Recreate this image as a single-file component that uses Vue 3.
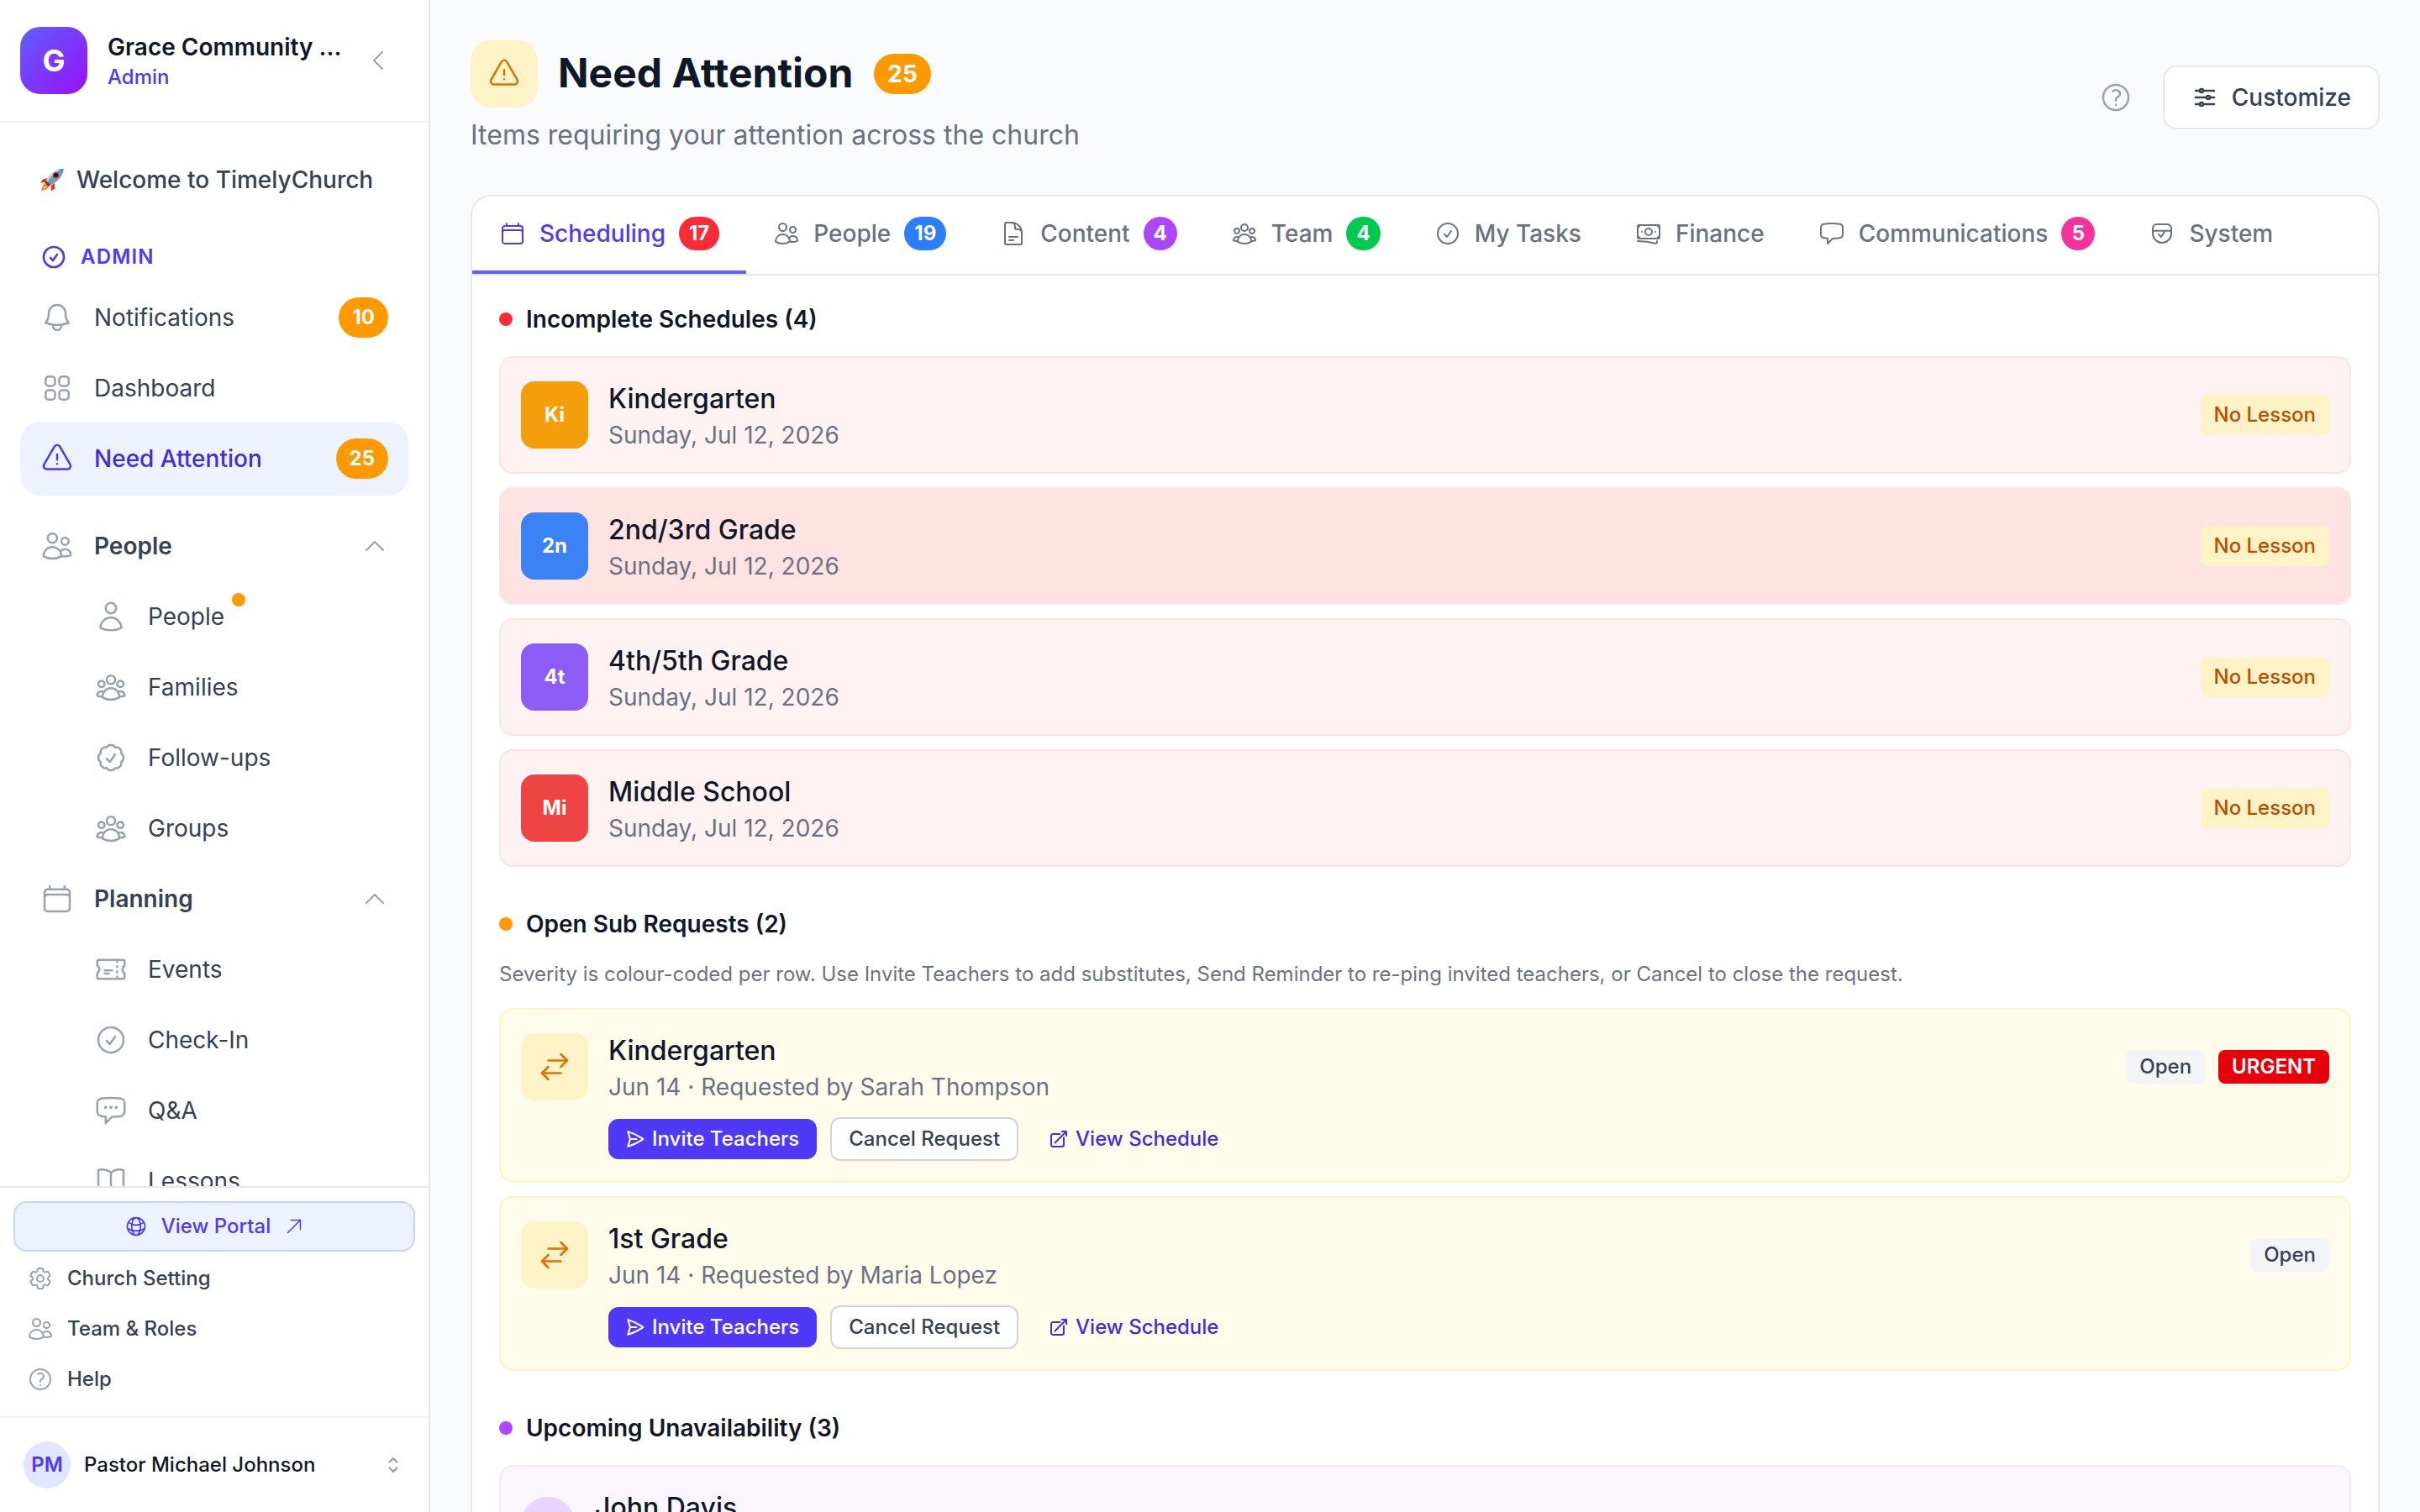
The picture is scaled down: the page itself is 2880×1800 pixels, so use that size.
<template>
  <div class="layout">
    <aside class="sidebar">
      <div class="church">
        <div class="church-logo">G</div>
        <div class="church-info">
          <div class="church-name">Grace Community ...</div>
          <div class="church-role">Admin</div>
        </div>
        <svg class="icon icon-md collapse" viewBox="0 0 24 24">
          <path :d="icons.chevronLeft" />
        </svg>
      </div>

      <nav class="nav">
        <div class="welcome">
          <svg class="rocket" viewBox="0 0 28 28">
            <path d="M8 12 3 13.5 0 17.5l7-.5Z" fill="#e8321c" />
            <path d="m17 18 .5 6.500-5 3 .5-7Z" fill="#e8321c" />
            <path d="m6 18-3 3-2 6 6-1.500 4-4Z" fill="#fb6a1c" />
            <path d="m6 20-3.500 5.500L8 23Z" fill="#ffe14a" />
            <path
              d="M27.500 1C20 1 12 5 6 16.500l4.500 4.500C20 17.500 27.500 9 27.500 1Z"
              fill="#6f9cb8"
            />
            <path
              d="M27.500 1C20 1 12 5 6 16.500l2 1.500C12 10 19 3.500 27.500 1Z"
              fill="#bcd9e8"
            />
            <path d="m7 15-1.500 2.500 4 4 2.500-1.500Z" fill="#8f1d1a" />
            <path d="M22 1.800 27.500 1l-.5 5Z" fill="#4f8fc0" />
            <circle cx="18.500" cy="8.500" r="3.600" fill="#a92a24" />
            <circle cx="18.500" cy="8.500" r="2.200" fill="#1f1413" />
          </svg>
          <span>Welcome to TimelyChurch</span>
        </div>

        <div class="nav-label">
          <svg class="icon icon-md bold" viewBox="0 0 24 24">
            <path :d="icons.check" />
          </svg>
          <span>ADMIN</span>
        </div>

        <div
          v-for="item in adminItems"
          :key="item.label"
          class="nav-item"
          :class="{ active: item.active, tall: item.count }"
        >
          <svg class="icon icon-lg" viewBox="0 0 24 24">
            <path :d="icons[item.icon]" />
          </svg>
          <span class="nav-text">{{ item.label }}</span>
          <span v-if="item.count" class="nav-count">{{ item.count }}</span>
        </div>

        <div class="nav-groups">
          <div v-for="group in groups" :key="group.label">
            <div class="group-head">
              <svg class="icon icon-lg" viewBox="0 0 24 24">
                <path :d="icons[group.icon]" />
              </svg>
              <span class="nav-text">{{ group.label }}</span>
              <svg class="icon icon-md" viewBox="0 0 24 24">
                <path :d="icons.chevronUp" />
              </svg>
            </div>
            <div
              v-for="item in group.items"
              :key="item.label"
              class="group-item"
            >
              <svg class="icon icon-lg" viewBox="0 0 24 24">
                <path :d="icons[item.icon]" />
              </svg>
              <span>{{ item.label }}</span>
              <span v-if="item.dot" class="item-dot"></span>
            </div>
          </div>
        </div>
      </nav>

      <div class="side-footer">
        <a class="portal">
          <svg class="icon icon-28" viewBox="0 0 24 24">
            <path :d="icons.globe" />
          </svg>
          <span>View Portal</span>
          <svg class="icon icon-sm" viewBox="0 0 24 24">
            <path :d="icons.arrowUpRight" />
          </svg>
        </a>
        <div v-for="link in footerLinks" :key="link.label" class="footer-link">
          <svg class="icon icon-md" viewBox="0 0 24 24">
            <path :d="icons[link.icon]" />
          </svg>
          <span>{{ link.label }}</span>
        </div>
      </div>

      <div class="user">
        <div class="user-avatar">PM</div>
        <span class="user-name">Pastor Michael Johnson</span>
        <svg class="icon icon-28 bold" viewBox="0 0 24 24">
          <path :d="icons.upDown" />
        </svg>
      </div>
    </aside>

    <main class="main">
      <header class="page-header">
        <div>
          <div class="title-row">
            <div class="title-icon">
              <svg class="icon icon-lg" viewBox="0 0 24 24">
                <path :d="icons.warning" />
              </svg>
            </div>
            <h1>Need Attention</h1>
            <span class="title-count">25</span>
          </div>
          <p class="subtitle">Items requiring your attention across the church</p>
        </div>
        <div class="header-actions">
          <svg class="icon icon-lg help" viewBox="0 0 24 24">
            <path :d="icons.question" />
          </svg>
          <button class="customize">
            <svg class="icon icon-md bold" viewBox="0 0 24 24">
              <path :d="icons.adjustments" />
            </svg>
            Customize
          </button>
        </div>
      </header>

      <section class="panel">
        <div class="tabs">
          <div
            v-for="tab in tabs"
            :key="tab.label"
            class="tab"
            :class="{ active: activeTab === tab.label }"
            @click="activeTab = tab.label"
          >
            <svg class="icon icon-md" viewBox="0 0 24 24">
              <path :d="icons[tab.icon]" />
            </svg>
            <span>{{ tab.label }}</span>
            <span
              v-if="tab.count"
              class="tab-count"
              :style="{ background: tab.color }"
              >{{ tab.count }}</span
            >
          </div>
        </div>

        <div class="content">
          <div class="block">
            <h2><span class="dot red"></span>Incomplete Schedules (4)</h2>
            <div class="cards">
              <div
                v-for="item in schedules"
                :key="item.name"
                class="card card-red"
                :class="{ hovered: item.hovered }"
              >
                <div class="tile" :style="{ background: item.color }">
                  {{ item.name.slice(0, 2) }}
                </div>
                <div class="card-body">
                  <div class="card-title">{{ item.name }}</div>
                  <div class="card-sub">Sunday, Jul 12, 2026</div>
                </div>
                <span class="tag tag-lesson">No Lesson</span>
              </div>
            </div>
          </div>

          <div class="block">
            <h2><span class="dot orange"></span>Open Sub Requests (2)</h2>
            <p class="hint">
              Severity is colour-coded per row. Use Invite Teachers to add
              substitutes, Send Reminder to re-ping invited teachers, or Cancel
              to close the request.
            </p>
            <div class="cards">
              <div
                v-for="request in requests"
                :key="request.name"
                class="card card-amber"
              >
                <div class="tile tile-amber">
                  <svg class="icon icon-lg" viewBox="0 0 24 24">
                    <path :d="icons.swap" />
                  </svg>
                </div>
                <div class="card-body">
                  <div class="card-title">{{ request.name }}</div>
                  <div class="card-sub">
                    Jun 14 · Requested by {{ request.by }}
                  </div>
                  <div class="actions">
                    <button class="btn btn-primary">
                      <svg class="icon icon-sm bold" viewBox="0 0 24 24">
                        <path :d="icons.send" />
                      </svg>
                      Invite Teachers
                    </button>
                    <button class="btn btn-outline">Cancel Request</button>
                    <button class="btn btn-link">
                      <svg class="icon icon-sm bold" viewBox="0 0 24 24">
                        <path :d="icons.external" />
                      </svg>
                      View Schedule
                    </button>
                  </div>
                </div>
                <div class="tags">
                  <span class="tag tag-open">Open</span>
                  <span v-if="request.urgent" class="tag tag-urgent"
                    >URGENT</span
                  >
                </div>
              </div>
            </div>
          </div>

          <div class="block">
            <h2><span class="dot purple"></span>Upcoming Unavailability (3)</h2>
            <div class="cards">
              <div class="card card-purple">
                <div class="person"></div>
                <div class="card-body">
                  <div class="card-title">John Davis</div>
                </div>
              </div>
            </div>
          </div>
        </div>
      </section>
    </main>
  </div>
</template>

<script setup>
import { ref } from "vue";

const activeTab = ref("Scheduling");

const adminItems = [
  { label: "Notifications", icon: "bell", count: 10 },
  { label: "Dashboard", icon: "grid" },
  { label: "Need Attention", icon: "warning", count: 25, active: true },
];

const groups = [
  {
    label: "People",
    icon: "users",
    items: [
      { label: "People", icon: "user", dot: true },
      { label: "Families", icon: "group" },
      { label: "Follow-ups", icon: "badge" },
      { label: "Groups", icon: "group" },
    ],
  },
  {
    label: "Planning",
    icon: "calendar",
    items: [
      { label: "Events", icon: "ticket" },
      { label: "Check-In", icon: "check" },
      { label: "Q&A", icon: "chatDots" },
      { label: "Lessons", icon: "book" },
    ],
  },
];

const footerLinks = [
  { label: "Church Setting", icon: "cog" },
  { label: "Team & Roles", icon: "users" },
  { label: "Help", icon: "question" },
];

const tabs = [
  { label: "Scheduling", icon: "calendar", count: 17, color: "#fb2c36" },
  { label: "People", icon: "users", count: 19, color: "#2b7fff" },
  { label: "Content", icon: "document", count: 4, color: "#ad46ff" },
  { label: "Team", icon: "group", count: 4, color: "#00c950" },
  { label: "My Tasks", icon: "check" },
  { label: "Finance", icon: "banknotes" },
  { label: "Communications", icon: "chat", count: 5, color: "#f6339a" },
  { label: "System", icon: "system" },
];

const schedules = [
  { name: "Kindergarten", color: "#f59e0b" },
  { name: "2nd/3rd Grade", color: "#3b82f6", hovered: true },
  { name: "4th/5th Grade", color: "#8b5cf6" },
  { name: "Middle School", color: "#ef4444" },
];

const requests = [
  { name: "Kindergarten", by: "Sarah Thompson", urgent: true },
  { name: "1st Grade", by: "Maria Lopez" },
];

const icons = {
  chevronLeft: "M15.75 19.5 8.25 12l7.5-7.5",
  chevronUp: "m4.5 15.75 7.5-7.5 7.5 7.5",
  upDown: "M8.25 15 12 18.75 15.75 15m-7.5-6L12 5.25 15.75 9",
  arrowUpRight: "m4.5 19.5 15-15m0 0H8.25m11.25 0v11.25",
  check: "M9 12.75 11.25 15 15 9.75M21 12a9 9 0 1 1-18 0 9 9 0 0 1 18 0Z",
  bell: "M14.857 17.082a23.848 23.848 0 0 0 5.454-1.31A8.967 8.967 0 0 1 18 9.75V9A6 6 0 0 0 6 9v.75a8.967 8.967 0 0 1-2.312 6.022c1.733.64 3.56 1.085 5.455 1.31m5.714 0a24.255 24.255 0 0 1-5.714 0m5.714 0a3 3 0 1 1-5.714 0",
  grid: "M3.75 6A2.25 2.25 0 0 1 6 3.75h2.25A2.25 2.25 0 0 1 10.5 6v2.25a2.25 2.25 0 0 1-2.25 2.25H6a2.25 2.25 0 0 1-2.25-2.25V6ZM3.75 15.75A2.25 2.25 0 0 1 6 13.5h2.25a2.25 2.25 0 0 1 2.25 2.25V18a2.25 2.25 0 0 1-2.25 2.25H6A2.25 2.25 0 0 1 3.75 18v-2.25ZM13.5 6a2.25 2.25 0 0 1 2.25-2.25H18A2.25 2.25 0 0 1 20.25 6v2.25A2.25 2.25 0 0 1 18 10.5h-2.25a2.25 2.25 0 0 1-2.25-2.25V6ZM13.5 15.75a2.25 2.25 0 0 1 2.25-2.25H18a2.25 2.25 0 0 1 2.25 2.25V18A2.25 2.25 0 0 1 18 20.25h-2.25A2.25 2.25 0 0 1 13.5 18v-2.25Z",
  warning:
    "M12 9v3.75m-9.303 3.376c-.866 1.5.217 3.374 1.948 3.374h14.71c1.73 0 2.813-1.874 1.948-3.374L13.949 3.378c-.866-1.5-3.032-1.5-3.898 0L2.697 16.126ZM12 15.75h.007v.008H12v-.008Z",
  users:
    "M15 19.128a9.38 9.38 0 0 0 2.625.372 9.337 9.337 0 0 0 4.121-.952 4.125 4.125 0 0 0-7.533-2.493M15 19.128v-.003c0-1.113-.285-2.16-.786-3.07M15 19.128v.106A12.318 12.318 0 0 1 8.624 21c-2.331 0-4.512-.645-6.374-1.766l-.001-.109a6.375 6.375 0 0 1 11.964-3.07M12 6.375a3.375 3.375 0 1 1-6.75 0 3.375 3.375 0 0 1 6.75 0Zm8.25 2.25a2.625 2.625 0 1 1-5.25 0 2.625 2.625 0 0 1 5.25 0Z",
  user: "M15.75 6a3.75 3.75 0 1 1-7.5 0 3.75 3.75 0 0 1 7.5 0ZM4.501 20.118a7.5 7.5 0 0 1 14.998 0A17.933 17.933 0 0 1 12 21.75c-2.676 0-5.216-.584-7.499-1.632Z",
  group:
    "M18 18.72a9.094 9.094 0 0 0 3.741-.479 3 3 0 0 0-4.682-2.72m.94 3.198.001.031c0 .225-.012.447-.037.666A11.944 11.944 0 0 1 12 21c-2.17 0-4.207-.576-5.963-1.584A6.062 6.062 0 0 1 6 18.719m12 0a5.971 5.971 0 0 0-.941-3.197m0 0A5.995 5.995 0 0 0 12 12.75a5.995 5.995 0 0 0-5.058 2.772m0 0a3 3 0 0 0-4.681 2.72 8.986 8.986 0 0 0 3.74.477m.94-3.197a5.971 5.971 0 0 0-.94 3.197M15 6.75a3 3 0 1 1-6 0 3 3 0 0 1 6 0Zm6 3a2.25 2.25 0 1 1-4.5 0 2.25 2.25 0 0 1 4.5 0Zm-13.5 0a2.25 2.25 0 1 1-4.5 0 2.25 2.25 0 0 1 4.5 0Z",
  badge:
    "M9 12.75 11.25 15 15 9.75M21 12c0 1.268-.63 2.39-1.593 3.068a3.745 3.745 0 0 1-1.043 3.296 3.745 3.745 0 0 1-3.296 1.043A3.745 3.745 0 0 1 12 21c-1.268 0-2.39-.63-3.068-1.593a3.746 3.746 0 0 1-3.296-1.043 3.745 3.745 0 0 1-1.043-3.296A3.745 3.745 0 0 1 3 12c0-1.268.63-2.39 1.593-3.068a3.745 3.745 0 0 1 1.043-3.296 3.746 3.746 0 0 1 3.296-1.043A3.746 3.746 0 0 1 12 3c1.268 0 2.39.63 3.068 1.593a3.746 3.746 0 0 1 3.296 1.043 3.746 3.746 0 0 1 1.043 3.296A3.745 3.745 0 0 1 21 12Z",
  calendar:
    "M6.75 3v2.25M17.25 3v2.25M3 18.75V7.5a2.25 2.25 0 0 1 2.25-2.25h13.5A2.25 2.25 0 0 1 21 7.5v11.25m-18 0A2.25 2.25 0 0 0 5.25 21h13.5A2.25 2.25 0 0 0 21 18.75m-18 0v-7.5A2.25 2.25 0 0 1 5.25 9h13.5A2.25 2.25 0 0 1 21 11.25v7.5",
  ticket:
    "M16.5 6v.75m0 3v.75m0 3v.75m0 3V18m-9-5.25h5.25M7.5 15h3M3.375 5.25c-.621 0-1.125.504-1.125 1.125v3.026a2.999 2.999 0 0 1 0 5.198v3.026c0 .621.504 1.125 1.125 1.125h17.25c.621 0 1.125-.504 1.125-1.125v-3.026a2.999 2.999 0 0 1 0-5.198V6.375c0-.621-.504-1.125-1.125-1.125H3.375Z",
  chatDots:
    "M8.625 9.75a.375.375 0 1 1-.75 0 .375.375 0 0 1 .75 0Zm0 0H8.25m4.125 0a.375.375 0 1 1-.75 0 .375.375 0 0 1 .75 0Zm0 0H12m4.125 0a.375.375 0 1 1-.75 0 .375.375 0 0 1 .75 0Zm0 0h-.375m-13.5 3.01c0 1.6 1.123 2.994 2.707 3.227 1.087.16 2.185.283 3.293.369V21l4.184-4.183a1.14 1.14 0 0 1 .778-.332 48.294 48.294 0 0 0 5.83-.498c1.585-.233 2.708-1.626 2.708-3.228V6.741c0-1.602-1.123-2.995-2.707-3.228A48.394 48.394 0 0 0 12 3c-2.392 0-4.744.175-7.043.513C3.373 3.746 2.25 5.14 2.25 6.741v6.018Z",
  chat: "M2.25 12.76c0 1.6 1.123 2.994 2.707 3.227 1.087.16 2.185.283 3.293.369V21l4.076-4.076a1.526 1.526 0 0 1 1.037-.443 48.282 48.282 0 0 0 5.68-.494c1.584-.233 2.707-1.626 2.707-3.228V6.741c0-1.602-1.123-2.995-2.707-3.228A48.394 48.394 0 0 0 12 3c-2.392 0-4.744.175-7.043.513C3.373 3.746 2.25 5.14 2.25 6.741v6.018Z",
  book: "M12 6.042A8.967 8.967 0 0 0 6 3.75c-1.052 0-2.062.18-3 .512v14.25A8.987 8.987 0 0 1 6 18c2.305 0 4.408.867 6 2.292m0-14.25a8.966 8.966 0 0 1 6-2.292c1.052 0 2.062.18 3 .512v14.25A8.987 8.987 0 0 0 18 18a8.967 8.967 0 0 0-6 2.292m0-14.25v14.25",
  globe:
    "M12 21a9.004 9.004 0 0 0 8.716-6.747M12 21a9.004 9.004 0 0 1-8.716-6.747M12 21c2.485 0 4.5-4.03 4.5-9S14.485 3 12 3m0 18c-2.485 0-4.5-4.03-4.5-9S9.515 3 12 3m0 0a8.997 8.997 0 0 1 7.843 4.582M12 3a8.997 8.997 0 0 0-7.843 4.582m15.686 0A11.953 11.953 0 0 1 12 10.5c-2.998 0-5.74-1.1-7.843-2.918m15.686 0A8.959 8.959 0 0 1 21 12c0 .778-.099 1.533-.284 2.253m0 0A17.919 17.919 0 0 1 12 16.5c-3.162 0-6.133-.815-8.716-2.247m0 0A9.015 9.015 0 0 1 3 12c0-1.605.42-3.113 1.157-4.418",
  cog: "M9.594 3.94c.09-.542.56-.94 1.11-.94h2.593c.55 0 1.02.398 1.11.94l.213 1.281c.063.374.313.686.645.87.074.04.147.083.22.127.325.196.72.257 1.075.124l1.217-.456a1.125 1.125 0 0 1 1.37.49l1.296 2.247a1.125 1.125 0 0 1-.26 1.431l-1.003.827c-.293.241-.438.613-.43.992a7.723 7.723 0 0 1 0 .255c-.008.378.137.75.43.991l1.004.827c.424.35.534.955.26 1.43l-1.298 2.247a1.125 1.125 0 0 1-1.369.491l-1.217-.456c-.355-.133-.75-.072-1.076.124a6.47 6.47 0 0 1-.22.128c-.331.183-.581.495-.644.869l-.213 1.281c-.09.543-.56.94-1.11.94h-2.594c-.55 0-1.019-.398-1.11-.94l-.213-1.281c-.062-.374-.312-.686-.644-.87a6.52 6.52 0 0 1-.22-.127c-.325-.196-.72-.257-1.076-.124l-1.217.456a1.125 1.125 0 0 1-1.369-.49l-1.297-2.247a1.125 1.125 0 0 1 .26-1.431l1.004-.827c.292-.24.437-.613.43-.991a6.932 6.932 0 0 1 0-.255c.007-.38-.138-.751-.43-.992l-1.004-.827a1.125 1.125 0 0 1-.26-1.43l1.297-2.247a1.125 1.125 0 0 1 1.37-.491l1.216.456c.356.133.751.072 1.076-.124.072-.044.146-.086.22-.128.332-.183.582-.495.644-.869l.214-1.28ZM15 12a3 3 0 1 1-6 0 3 3 0 0 1 6 0Z",
  question:
    "M9.879 7.519c1.171-1.025 3.071-1.025 4.242 0 1.172 1.025 1.172 2.687 0 3.712-.203.179-.43.326-.67.442-.745.361-1.45.999-1.45 1.827v.75M21 12a9 9 0 1 1-18 0 9 9 0 0 1 18 0Zm-9 5.25h.008v.008H12v-.008Z",
  document:
    "M19.5 14.25v-2.625a3.375 3.375 0 0 0-3.375-3.375h-1.5A1.125 1.125 0 0 1 13.5 7.125v-1.5a3.375 3.375 0 0 0-3.375-3.375H8.25m0 12.75h7.5m-7.5 3H12M10.5 2.25H5.625c-.621 0-1.125.504-1.125 1.125v17.25c0 .621.504 1.125 1.125 1.125h12.75c.621 0 1.125-.504 1.125-1.125V11.25a9 9 0 0 0-9-9Z",
  banknotes:
    "M2.25 18.75a60.07 60.07 0 0 1 15.797 2.101c.727.198 1.453-.342 1.453-1.096V18.75M3.75 4.5v.75A.75.75 0 0 1 3 6h-.75m0 0v-.375c0-.621.504-1.125 1.125-1.125H20.25M2.25 6v9m18-10.5v.75c0 .414.336.75.75.75h.75m-1.5-1.5h.375c.621 0 1.125.504 1.125 1.125v9.75c0 .621-.504 1.125-1.125 1.125h-.375m1.5-1.5H21a.75.75 0 0 0-.75.75v.75m0 0H3.75m0 0h-.375a1.125 1.125 0 0 1-1.125-1.125V15m1.5 1.5v-.75A.75.75 0 0 0 3 15h-.75M15 10.5a3 3 0 1 1-6 0 3 3 0 0 1 6 0Zm3 0h.008v.008H18V10.5Zm-12 0h.008v.008H6V10.5Z",
  system:
    "M3.750 9.500V7.250a3.500 3.500 0 0 1 3.500-3.500h9.500a3.500 3.500 0 0 1 3.500 3.500V12a8.250 8.250 0 0 1-16.500 0V9.500Zm0 0h16.500M9 12.750l2.250 2.250 3-4.500",
  adjustments:
    "M10.5 6h9.75M10.5 6a1.5 1.5 0 1 1-3 0m3 0a1.5 1.5 0 1 0-3 0M3.75 6H7.5m3 12h9.75m-9.75 0a1.5 1.5 0 0 1-3 0m3 0a1.5 1.5 0 0 0-3 0m-3.75 0H7.5m9-6h3.75m-3.75 0a1.5 1.5 0 0 1-3 0m3 0a1.5 1.5 0 0 0-3 0m-9.75 0h9.75",
  swap: "M7.5 21 3 16.5m0 0L7.5 12M3 16.5h13.5m0-13.5L21 7.5m0 0L16.5 12M21 7.5H7.5",
  send: "M6 12 3.269 3.125A59.769 59.769 0 0 1 21.485 12 59.768 59.768 0 0 1 3.27 20.875L5.999 12Zm0 0h7.5",
  external:
    "M13.5 6H5.25A2.25 2.25 0 0 0 3 8.25v10.5A2.25 2.25 0 0 0 5.25 21h10.5A2.25 2.25 0 0 0 18 18.75V10.5m-10.5 6L21 3m0 0h-5.25M21 3v5.25",
};
</script>

<style>
html,
body {
  margin: 0;
  overflow: hidden;
}
</style>

<style scoped>
.layout {
  display: flex;
  height: 1800px;
  overflow: hidden;
  background: #f9fafb;
  color: #101828;
  font-family: Inter, "Liberation Sans", sans-serif;
  font-size: 28px;
  line-height: 40px;
}

.layout *,
.layout {
  box-sizing: border-box;
}

h1,
h2,
p {
  margin: 0;
}

button {
  font: inherit;
  border: none;
  background: none;
}

.icon {
  flex-shrink: 0;
  fill: none;
  stroke: currentColor;
  stroke-width: 1.5;
  stroke-linecap: round;
  stroke-linejoin: round;
}

.icon.bold {
  stroke-width: 2;
}

.icon-sm {
  width: 24px;
  height: 24px;
}

.icon-28 {
  width: 28px;
  height: 28px;
}

.icon-md {
  width: 32px;
  height: 32px;
}

.icon-lg {
  width: 40px;
  height: 40px;
}

/* sidebar */
.sidebar {
  display: flex;
  flex-direction: column;
  flex-shrink: 0;
  width: 512px;
  background: #fff;
  border-right: 2px solid #e5e7eb;
}

.church {
  display: flex;
  align-items: center;
  gap: 24px;
  height: 146px;
  padding: 0 44px 0 24px;
  border-bottom: 2px solid #f3f4f6;
}

.church-logo {
  display: flex;
  align-items: center;
  justify-content: center;
  flex-shrink: 0;
  width: 80px;
  height: 80px;
  border-radius: 24px;
  background: linear-gradient(to bottom right, #615fff, #9810fa);
  color: #fff;
  font-size: 36px;
  font-weight: 700;
}

.church-info {
  width: 282px;
}

.church-name {
  white-space: nowrap;
  font-weight: 600;
}

.church-role {
  color: #4f39f6;
  font-size: 24px;
  font-weight: 500;
  line-height: 32px;
}

.collapse {
  color: #99a1af;
}

.nav {
  flex: 1;
  min-height: 0;
  overflow: hidden;
  padding: 24px;
  color: #364153;
}

.welcome {
  display: flex;
  align-items: center;
  gap: 15px;
  height: 88px;
  padding-left: 24px;
  font-weight: 500;
}

.rocket {
  width: 28px;
  height: 28px;
}

.nav-label {
  display: flex;
  align-items: center;
  gap: 16px;
  height: 56px;
  margin-top: 20px;
  padding-left: 24px;
  color: #4f39f6;
  font-size: 24px;
  font-weight: 600;
  letter-spacing: 0.05em;
}

.nav-item {
  display: flex;
  align-items: center;
  gap: 24px;
  height: 80px;
  padding: 0 24px;
  border-radius: 24px;
}

.nav-item.tall {
  height: 88px;
}

.nav-item .icon,
.group-head .icon,
.group-item .icon {
  color: #99a1af;
}

.nav-item.active {
  background: #eef2ff;
  color: #432dd7;
  font-weight: 500;
}

.nav-item.active .icon {
  color: #4f39f6;
}

.nav-text {
  flex: 1;
}

.nav-count {
  height: 48px;
  padding: 0 16px;
  border-radius: 24px;
  background: #fe9a00;
  color: #fff;
  font-size: 24px;
  font-weight: 700;
  line-height: 48px;
}

.nav-groups {
  margin-top: 18px;
}

.group-head,
.group-item {
  display: flex;
  align-items: center;
  gap: 24px;
  height: 84px;
  padding: 0 24px;
}

.group-head {
  font-weight: 600;
}

.group-item {
  padding-left: 88px;
}

.item-dot {
  width: 16px;
  height: 16px;
  margin: 0 0 40px -15px;
  border-radius: 50%;
  background: #fe9a00;
}

.side-footer {
  padding: 16px 16px 14px;
  border-top: 2px solid #e5e7eb;
  font-size: 24px;
  font-weight: 500;
}

.portal {
  display: flex;
  align-items: center;
  justify-content: center;
  gap: 16px;
  height: 60px;
  margin-bottom: 2px;
  border: 2px solid #c6d2ff;
  border-radius: 16px;
  background: #eef2ff;
  color: #4f39f6;
}

.footer-link {
  display: flex;
  align-items: center;
  gap: 16px;
  height: 60px;
  padding-left: 16px;
  color: #364153;
}

.footer-link .icon {
  color: #99a1af;
}

.user {
  display: flex;
  align-items: center;
  gap: 16px;
  height: 114px;
  padding: 0 28px;
  border-top: 2px solid #f3f4f6;
  font-size: 24px;
  font-weight: 500;
}

.user-avatar {
  display: flex;
  align-items: center;
  justify-content: center;
  width: 56px;
  height: 56px;
  border-radius: 50%;
  background: #e0e7ff;
  color: #4f39f6;
  font-weight: 600;
}

.user-name {
  flex: 1;
}

.user .icon {
  color: #99a1af;
}

/* page header */
.main {
  flex: 1;
  min-width: 0;
  padding: 48px 48px 0;
}

.page-header {
  display: flex;
  align-items: center;
  justify-content: space-between;
}

.title-row {
  display: flex;
  align-items: center;
  gap: 24px;
}

.title-icon {
  display: flex;
  align-items: center;
  justify-content: center;
  width: 80px;
  height: 80px;
  border-radius: 24px;
  background: #fef3c6;
  color: #e17100;
}

h1 {
  margin: 0 1px 2px 0;
  font-size: 48px;
  font-weight: 700;
  line-height: 64px;
}

.title-count {
  height: 48px;
  padding: 0 16px;
  border-radius: 24px;
  background: #fe9a00;
  color: #fff;
  font-weight: 700;
  line-height: 48px;
}

.subtitle {
  margin-top: 8px;
  padding-top: 2px;
  color: #6a7282;
  font-size: 32px;
  line-height: 46px;
}

.header-actions {
  display: flex;
  align-items: center;
  gap: 36px;
}

.help {
  color: #99a1af;
}

.customize {
  display: flex;
  align-items: center;
  gap: 16px;
  height: 76px;
  padding: 0 32px;
  border: 2px solid #e5e7eb;
  border-radius: 16px;
  background: #fff;
  color: #364153;
  font-weight: 500;
}

/* panel */
.panel {
  margin-top: 48px;
  height: 1700px;
  border: 2px solid #e5e7eb;
  border-radius: 24px;
  background: #fff;
  overflow: hidden;
}

.tabs {
  display: flex;
  border-bottom: 2px solid #e5e7eb;
}

.tab {
  display: flex;
  align-items: center;
  gap: 16px;
  height: 92px;
  padding: 0 32px;
  border-bottom: 4px solid transparent;
  color: #6a7282;
  font-weight: 500;
}

.tab.active {
  border-color: #615fff;
  color: #4f39f6;
}

.tab-count {
  min-width: 40px;
  height: 40px;
  padding: 0 12px;
  border-radius: 20px;
  color: #fff;
  font-size: 24px;
  font-weight: 700;
  text-align: center;
}

.content {
  padding: 32px;
}

.block {
  margin-bottom: 48px;
}

h2 {
  display: flex;
  align-items: center;
  gap: 16px;
  margin-bottom: 24px;
  font-size: 28px;
  font-weight: 600;
}

.dot {
  width: 16px;
  height: 16px;
  border-radius: 50%;
}

.dot.red {
  background: #fb2c36;
}

.dot.orange {
  background: #fe9a00;
}

.dot.purple {
  background: #ad46ff;
}

.hint {
  margin-bottom: 24px;
  color: #6a7282;
  font-size: 24px;
  line-height: 32px;
}

.cards {
  display: flex;
  flex-direction: column;
  gap: 16px;
}

.card {
  display: flex;
  align-items: center;
  gap: 24px;
  padding: 24px;
  border: 2px solid;
  border-radius: 16px;
}

.card-red {
  border-color: #ffe2e2;
  background: #fef2f2;
}

.card-red.hovered {
  background: #ffe2e2;
}

.card-amber {
  align-items: flex-start;
  border-color: #fef3c6;
  background: #fffbeb;
}

.card-purple {
  height: 140px;
  align-items: flex-start;
  border-color: #f3e8ff;
  background: #faf5ff;
}

.tile {
  display: flex;
  align-items: center;
  justify-content: center;
  width: 80px;
  height: 80px;
  border-radius: 16px;
  color: #fff;
  font-size: 24px;
  font-weight: 700;
}

.tile-amber {
  margin-top: 4px;
  background: #fef3c6;
  color: #e17100;
}

.person {
  width: 64px;
  height: 64px;
  margin-top: 12px;
  border-radius: 50%;
  background: #e9d4ff;
}

.card-body {
  flex: 1;
}

.card-title {
  padding-top: 2px;
  font-size: 32px;
  font-weight: 500;
  line-height: 46px;
}

.card-sub {
  color: #6a7282;
}

.actions {
  display: flex;
  align-items: center;
  gap: 16px;
  margin-top: 16px;
}

.btn {
  display: flex;
  align-items: center;
  gap: 8px;
  height: 48px;
  padding: 0 20px;
  border-radius: 12px;
  font-size: 24px;
  font-weight: 500;
}

.btn-primary {
  padding-right: 21px;
  background: #4f39f6;
  color: #fff;
}

.btn-outline {
  height: 52px;
  border: 2px solid #d1d5dc;
  background: #fff;
  color: #364153;
}

.btn-link {
  color: #432dd7;
}

.tags {
  display: flex;
  gap: 16px;
  margin-top: 24px;
}

.tag {
  padding: 0 16px;
  border-radius: 8px;
  font-size: 24px;
  font-weight: 500;
}

.tag-lesson {
  background: #fef3c6;
  color: #bb4d00;
  line-height: 48px;
}

.tag-open {
  background: #f3f4f6;
  color: #364153;
}

.tag-urgent {
  background: #e7000b;
  color: #fff;
  font-weight: 600;
}
</style>
